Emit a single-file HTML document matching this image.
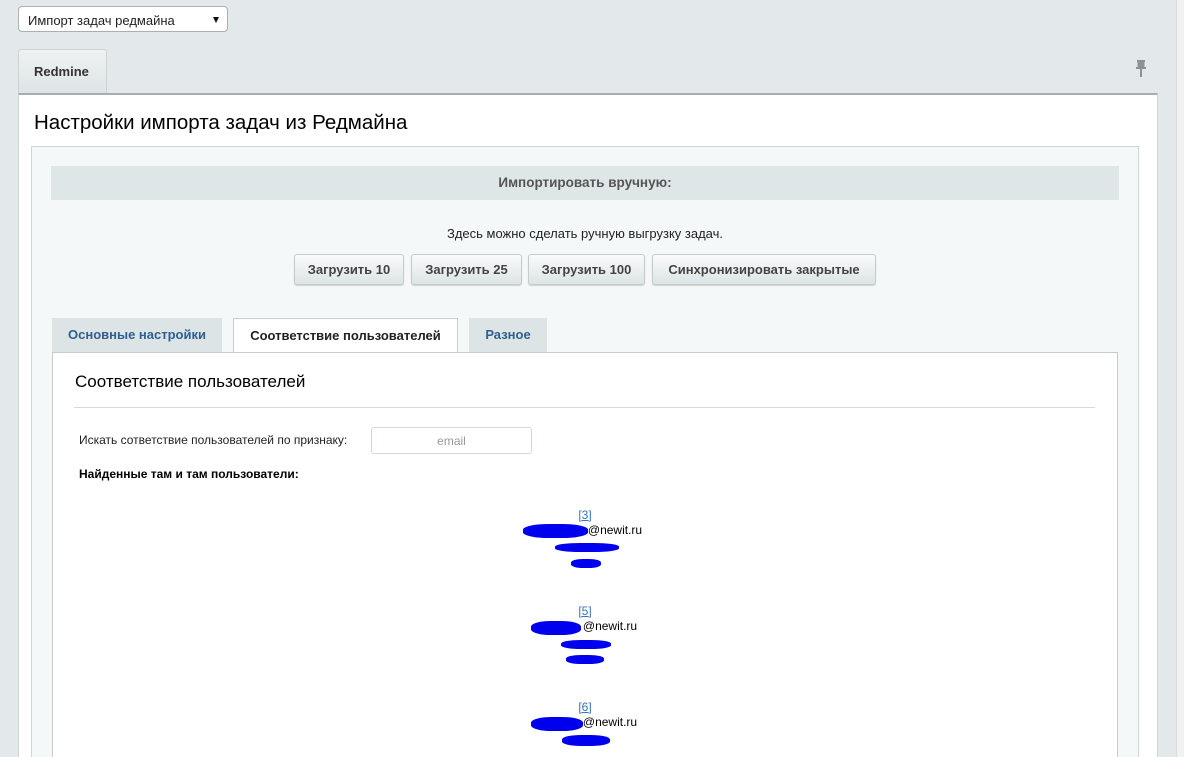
<!DOCTYPE html>
<html style="width:1184px;height:757px;overflow:hidden"><head><meta charset="utf-8"><style>
*{box-sizing:border-box;margin:0;padding:0}
body{width:1184px;height:757px;overflow:hidden;background:#e3e9ea;font-family:"Liberation Sans",Arial,sans-serif;position:relative}
.abs{position:absolute}
.sel{left:18px;top:6px;width:210px;height:26px;background:#fff;border:1px solid #a9b0b3;border-radius:4px;font-size:13px;color:#222;padding:6px 9px;}
.sel:after{content:"";position:absolute;right:8px;top:10px;border-left:3.5px solid transparent;border-right:3.5px solid transparent;border-top:6px solid #111}
.tab1{left:18px;top:49px;width:89px;height:46px;background:linear-gradient(#eef2f2,#dde4e5);border:1px solid #cdd3d4;border-bottom:none;border-radius:3px 3px 0 0;font-size:13px;font-weight:bold;color:#333;padding:14px 0 0 15px}
.panel{left:18px;top:93px;width:1140px;height:664px;background:#fff;border-top:2px solid #a8aeb0;border-left:1px solid #cfd5d6;border-right:1px solid #cfd5d6}
.scroll{left:1176px;top:0;width:8px;height:757px;background:#f1f1f1;border-left:1px solid #ddd}
h1{position:absolute;left:34px;top:111px;font-size:20.5px;font-weight:normal;color:#000}
.inner{left:31px;top:146px;width:1108px;height:611px;background:#f5f8f8;border:1px solid #cbd7da;border-bottom:none}
.hdr{left:51px;top:166px;width:1068px;height:34px;background:#dfe6e7;font-size:13.5px;font-weight:bold;color:#555;text-align:center;line-height:34px}
.txt{top:226px;font-size:13px;color:#222;text-align:center}
.btn{top:254px;height:31px;background:linear-gradient(#fafbfb,#dde4e6);border:1px solid #c4cbcd;border-radius:3px;box-shadow:0 1px 1px rgba(0,0,0,.15);font-size:13px;font-weight:bold;color:#444;text-align:center;line-height:29px}
.t{top:318px;height:34px;font-size:13px;font-weight:bold;line-height:34px;text-align:center}
.ti{background:#dde4e6;color:#2f5f8f}
.ta{background:#fff;border:1px solid #c8cfd1;border-bottom:none;color:#222;height:35px}
.cont{left:52px;top:352px;width:1066px;height:405px;background:#fff;border:1px solid #c6cccd;border-bottom:none}
h2{position:absolute;left:75px;top:372px;font-size:17px;font-weight:normal;color:#000}
.hr{left:74px;top:407px;width:1021px;height:1px;background:#d6dadb}
.lbl{left:79px;top:433px;font-size:12px;color:#222}
.inp{left:371px;top:427px;width:161px;height:27px;border:1px solid #d3d8d9;border-radius:3px;background:#fff;font-size:12px;color:#999;text-align:center;line-height:26px}
.b{left:79px;top:467px;font-size:12px;font-weight:bold;color:#000}
.u{left:0;width:1170px;text-align:center;font-size:12px;line-height:15px;color:#000}
.u a{color:#3a73c0;text-decoration:underline}
.bl{position:absolute;background:#0000ee;border-radius:40%}
</style></head><body>
<div class="abs sel">Импорт задач редмайна</div>
<div class="abs tab1">Redmine</div>
<div class="abs panel"></div>
<svg class="abs" style="left:1134px;top:60px" width="14" height="18" viewBox="0 0 14 18"><path d="M3 1h8M4.5 1v6M9.5 1v6M2 8h10M7 8v9" stroke="#8a9295" stroke-width="2" fill="none"/><rect x="4" y="1" width="6" height="7" fill="#8a9295"/></svg>
<div class="abs scroll"></div>
<h1>Настройки импорта задач из Редмайна</h1>
<div class="abs inner"></div>
<div class="abs hdr">Импортировать вручную:</div>
<div class="abs txt" style="left:0;width:1170px">Здесь можно сделать ручную выгрузку задач.</div>
<div class="abs btn" style="left:294px;width:110px">Загрузить 10</div>
<div class="abs btn" style="left:411px;width:111px">Загрузить 25</div>
<div class="abs btn" style="left:528px;width:117px">Загрузить 100</div>
<div class="abs btn" style="left:652px;width:224px">Синхронизировать закрытые</div>
<div class="abs t ti" style="left:52px;width:170px">Основные настройки</div>
<div class="abs t ta" style="left:233px;width:225px">Соответствие пользователей</div>
<div class="abs t ti" style="left:469px;width:78px">Разное</div>
<div class="abs cont"></div>
<h2>Соответствие пользователей</h2>
<div class="abs hr"></div>
<div class="abs lbl">Искать сответствие пользователей по признаку:</div>
<div class="abs inp">email</div>
<div class="abs b">Найденные там и там пользователи:</div>
<div class="abs u" style="top:508px"><a>[3]</a><br><span style="padding-left:60px">@newit.ru</span></div>
<div class="bl" style="left:523px;top:524px;width:65px;height:14px"></div>
<div class="bl" style="left:555px;top:543px;width:64px;height:9px"></div>
<div class="bl" style="left:571px;top:559px;width:30px;height:9px"></div>
<div class="abs u" style="top:604px"><a>[5]</a><br><span style="padding-left:50px">@newit.ru</span></div>
<div class="bl" style="left:531px;top:621px;width:50px;height:14px"></div>
<div class="bl" style="left:561px;top:640px;width:50px;height:9px"></div>
<div class="bl" style="left:566px;top:655px;width:38px;height:9px"></div>
<div class="abs u" style="top:700px"><a>[6]</a><br><span style="padding-left:50px">@newit.ru</span></div>
<div class="bl" style="left:531px;top:717px;width:52px;height:14px"></div>
<div class="bl" style="left:562px;top:735px;width:48px;height:11px"></div>
</body></html>
